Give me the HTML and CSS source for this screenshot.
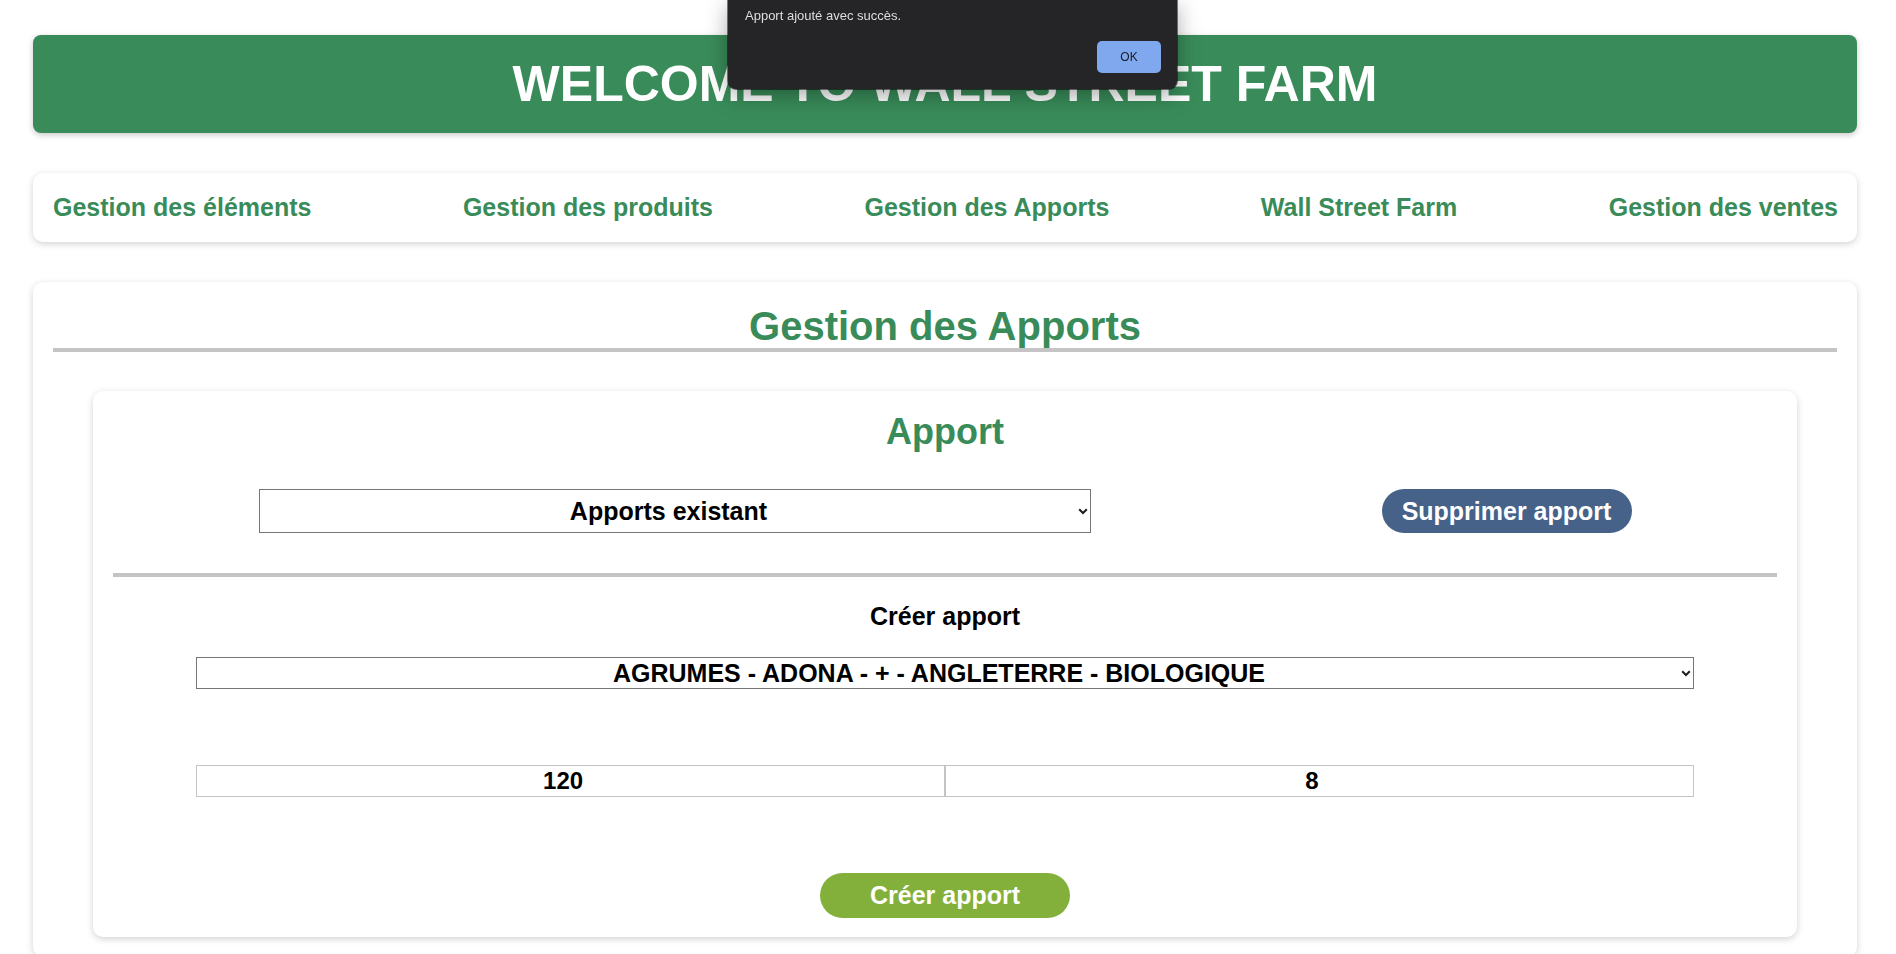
FILE: index.html
```html
<!DOCTYPE html>
<html lang="fr">
<head>
<meta charset="utf-8">
<title>Wall Street Farm - Gestion des Apports</title>
<link rel="stylesheet" href="styles.css">
</head>
<body>
  <div class="alert" role="alertdialog">
    <p class="alert-msg">Apport ajouté avec succès.</p>
    <div class="alert-actions"><button class="alert-ok">OK</button></div>
  </div>

  <header class="banner">
    <h1 class="banner-title">WELCOME TO WALL STREET FARM</h1>
  </header>

  <nav class="menu">
    <a class="menu-link" href="#">Gestion des éléments</a>
    <a class="menu-link" href="#">Gestion des produits</a>
    <a class="menu-link" href="#">Gestion des Apports</a>
    <a class="menu-link" href="#">Wall Street Farm</a>
    <a class="menu-link" href="#">Gestion des ventes</a>
  </nav>

  <main class="panel">
    <h2 class="panel-title">Gestion des Apports</h2>
    <section class="card">
      <h3 class="card-title">Apport</h3>
      <div class="existing-row">
        <div class="select-wrap select-existing">
          <select class="field-select tall"><option>Apports existant</option></select>
          <svg class="chev" width="10" height="7" viewBox="0 0 10 7"><path d="M1.2 1.3 L5 5 L8.8 1.3" fill="none" stroke="#1c1c1c" stroke-width="2"/></svg>
        </div>
        <button class="btn btn-delete">Supprimer apport</button>
      </div>
      <hr class="sep">
      <h4 class="create-label">Créer apport</h4>
      <div class="select-wrap select-product">
        <select class="field-select"><option>AGRUMES - ADONA - + - ANGLETERRE - BIOLOGIQUE</option></select>
        <svg class="chev" width="10" height="7" viewBox="0 0 10 7"><path d="M1.2 1.3 L5 5 L8.8 1.3" fill="none" stroke="#1c1c1c" stroke-width="2"/></svg>
      </div>
      <div class="inputs">
        <input class="field-input" type="text" value="120">
        <input class="field-input" type="text" value="8">
      </div>
      <button class="btn btn-create">Créer apport</button>
    </section>
  </main>
</body>
</html>
```

FILE: styles.css
```css
html, body {
  background: #ffffff;
}
body {
  margin: 0;
  padding: 35px 39px 0 33px;
  font-family: "Liberation Sans", Arial, Helvetica, sans-serif;
  color: #000;
  overflow: hidden;
  height: 954px;
  box-sizing: border-box;
}

/* ---------- alert dialog ---------- */
.alert {
  position: fixed;
  top: 0;
  left: 728px;
  width: 449px;
  height: 89px;
  box-sizing: border-box;
  background: #252527;
  border-radius: 0 0 8px 8px;
  box-shadow: 0 6px 22px rgba(0, 0, 0, 0.35), 0 0 0 1px rgba(0, 0, 0, 0.5);
  padding: 8px 16px 16px 17px;
  display: flex;
  flex-direction: column;
  justify-content: space-between;
  z-index: 10;
}
.alert-msg {
  margin: 0;
  font-family: "Liberation Sans", Arial, sans-serif;
  font-size: 13px;
  line-height: 16px;
  color: #dedede;
}
.alert-actions {
  display: flex;
  justify-content: flex-end;
}
.alert-ok {
  width: 64px;
  height: 32px;
  border: none;
  border-radius: 5px;
  background: #7fa8ef;
  color: #1b1b1d;
  font-family: "Liberation Sans", Arial, sans-serif;
  font-size: 12px;
  padding: 0;
}

/* ---------- banner ---------- */
.banner {
  height: 98px;
  background: #398c59;
  border-radius: 8px;
  box-shadow: 0 2px 6px rgba(0, 0, 0, 0.22);
  display: flex;
  align-items: center;
  justify-content: center;
}
.banner-title {
  margin: 0;
  color: #ffffff;
  font-size: 50px;
  font-weight: bold;
  line-height: 56px;
}

/* ---------- menu ---------- */
.menu {
  margin-top: 40px;
  height: 69px;
  box-sizing: border-box;
  padding: 0 19px 0 20px;
  background: #fff;
  border-radius: 10px;
  box-shadow: 0 2px 7px rgba(0, 0, 0, 0.18);
  display: flex;
  align-items: center;
  justify-content: space-between;
}
.menu-link {
  color: #398c59;
  font-size: 25px;
  font-weight: bold;
  text-decoration: none;
}

/* ---------- panel ---------- */
.panel {
  margin-top: 40px;
  padding: 22px 20px 20px;
  background: #fff;
  border-radius: 10px;
  box-shadow: 0 2px 7px rgba(0, 0, 0, 0.18);
}
.panel-title {
  margin: 0;
  text-align: center;
  color: #398c59;
  font-size: 40px;
  line-height: 44px;
  font-weight: bold;
  border-bottom: 4px solid #c4c4c4;
}

/* ---------- card ---------- */
.card {
  margin: 39px 40px 0 40px;
  padding: 20px 20px 19px;
  background: #fff;
  border-radius: 10px;
  box-shadow: 0 2px 7px rgba(0, 0, 0, 0.18);
  display: flex;
  flex-direction: column;
  align-items: center;
}
.card-title {
  margin: 0;
  color: #398c59;
  font-size: 36px;
  line-height: 41px;
  font-weight: bold;
}
.existing-row {
  margin-top: 37px;
  width: 100%;
  display: flex;
  justify-content: space-around;
  align-items: center;
}
.sep {
  margin: 40px 0 0;
  width: 100%;
  height: 4px;
  border: none;
  background: #c4c4c4;
}
.create-label {
  margin: 25px 0 0;
  font-size: 25px;
  line-height: 29px;
  font-weight: bold;
}

/* ---------- selects ---------- */
.select-wrap {
  position: relative;
}
.select-existing {
  width: 50%;
}
.select-product {
  margin-top: 26px;
  width: 90%;
}
.field-select {
  -webkit-appearance: none;
  appearance: none;
  width: 100%;
  height: 32px;
  box-sizing: border-box;
  border: 1px solid #767676;
  border-radius: 0;
  background: #fff;
  color: #000;
  font-family: "Liberation Sans", Arial, sans-serif;
  font-size: 25px;
  font-weight: bold;
  text-align: center;
  text-align-last: center;
  padding: 0 14px 0 2px;
}
.field-select.tall {
  height: 44px;
}
.chev {
  position: absolute;
  right: 3px;
  top: 50%;
  margin-top: -3px;
  pointer-events: none;
}

/* ---------- inputs ---------- */
.inputs {
  margin-top: 76px;
  width: 90%;
  display: flex;
}
.field-input {
  flex: 1 1 0;
  min-width: 0;
  height: 32px;
  box-sizing: border-box;
  border: 1px solid #c4c4c4;
  border-radius: 0;
  padding: 0 17px 0 2px;
  text-align: center;
  font-family: "Liberation Sans", Arial, sans-serif;
  font-size: 24px;
  font-weight: bold;
  color: #000;
  background: #fff;
}

/* ---------- buttons ---------- */
.btn {
  width: 250px;
  border: none;
  border-radius: 23px;
  color: #fff;
  font-family: "Liberation Sans", Arial, sans-serif;
  font-size: 25px;
  font-weight: bold;
  padding: 0;
}
.btn-delete {
  height: 44px;
  background: #466289;
}
.btn-create {
  margin-top: 76px;
  height: 45px;
  background: #83b03a;
}
```
